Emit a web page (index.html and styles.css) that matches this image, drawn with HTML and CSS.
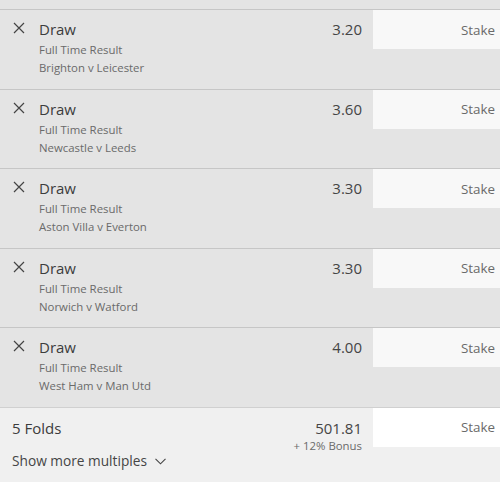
FILE: index.html
```html
<!DOCTYPE html>
<html>
<head>
<meta charset="utf-8">
<link rel="stylesheet" href="styles.css">
</head>
<body>
<div class="slip">
  <div class="top"></div>
  <div class="bet">
    <div class="close"><svg width="12" height="12" viewBox="0 0 12 12"><path d="M1 1L11 11M11 1L1 11" stroke="#444" stroke-width="1.2" fill="none"/></svg></div>
    <div class="info">
      <div class="sel">Draw</div>
      <div class="sub">Full Time Result</div>
      <div class="sub">Brighton v Leicester</div>
    </div>
    <div class="odds">3.20</div>
    <div class="stake">Stake</div>
  </div>
  <div class="bet">
    <div class="close"><svg width="12" height="12" viewBox="0 0 12 12"><path d="M1 1L11 11M11 1L1 11" stroke="#444" stroke-width="1.2" fill="none"/></svg></div>
    <div class="info">
      <div class="sel">Draw</div>
      <div class="sub">Full Time Result</div>
      <div class="sub">Newcastle v Leeds</div>
    </div>
    <div class="odds">3.60</div>
    <div class="stake">Stake</div>
  </div>
  <div class="bet">
    <div class="close"><svg width="12" height="12" viewBox="0 0 12 12"><path d="M1 1L11 11M11 1L1 11" stroke="#444" stroke-width="1.2" fill="none"/></svg></div>
    <div class="info">
      <div class="sel">Draw</div>
      <div class="sub">Full Time Result</div>
      <div class="sub">Aston Villa v Everton</div>
    </div>
    <div class="odds">3.30</div>
    <div class="stake">Stake</div>
  </div>
  <div class="bet">
    <div class="close"><svg width="12" height="12" viewBox="0 0 12 12"><path d="M1 1L11 11M11 1L1 11" stroke="#444" stroke-width="1.2" fill="none"/></svg></div>
    <div class="info">
      <div class="sel">Draw</div>
      <div class="sub">Full Time Result</div>
      <div class="sub">Norwich v Watford</div>
    </div>
    <div class="odds">3.30</div>
    <div class="stake">Stake</div>
  </div>
  <div class="bet">
    <div class="close"><svg width="12" height="12" viewBox="0 0 12 12"><path d="M1 1L11 11M11 1L1 11" stroke="#444" stroke-width="1.2" fill="none"/></svg></div>
    <div class="info">
      <div class="sel">Draw</div>
      <div class="sub">Full Time Result</div>
      <div class="sub">West Ham v Man Utd</div>
    </div>
    <div class="odds">4.00</div>
    <div class="stake">Stake</div>
  </div>
  <div class="multi">
    <div class="multi-row">
      <div class="folds">5 Folds</div>
      <div class="multi-odds">
        <div class="mval">501.81</div>
        <div class="bonus">+ 12% Bonus</div>
      </div>
      <div class="stake white">Stake</div>
    </div>
    <div class="more">Show more multiples <svg class="chev" width="11" height="7" viewBox="0 0 11 7"><path d="M0.5 0.8L5.5 5.8L10.5 0.8" stroke="#444" stroke-width="1.1" fill="none"/></svg></div>
  </div>
</div>
</body>
</html>
```

FILE: styles.css
```css
html, body {
  margin: 0;
  padding: 0;
}
body {
  width: 500px;
  height: 482px;
  overflow: hidden;
  background: #f0f0f0;
  font-family: "Open Sans", "Noto Sans", sans-serif;
  color: #3a3a3a;
}
.slip {
  display: flex;
  flex-direction: column;
}
.top {
  height: 9px;
  background: #e4e4e4;
}
.bet {
  box-sizing: border-box;
  height: 79.6px;
  border-top: 1px solid #c6c6c6;
  background: #e4e4e4;
  display: flex;
  align-items: flex-start;
}
.close {
  width: 39px;
  padding-top: 12px;
  padding-left: 13px;
  box-sizing: border-box;
  line-height: 0;
}
.info {
  flex: 1;
  padding-top: 9px;
}
.sel {
  font-size: 15px;
  line-height: 20px;
  margin-bottom: 2px;
  color: #3c3c3c;
}
.sub {
  font-size: 11.4px;
  line-height: 18px;
  color: #6a6a6a;
}
.odds {
  font-size: 15px;
  line-height: 20px;
  padding-top: 9px;
  padding-right: 11px;
  color: #454545;
}
.stake {
  width: 127px;
  height: 39px;
  box-sizing: border-box;
  background: #f8f8f8;
  font-size: 13.4px;
  color: #6a6a6a;
  display: flex;
  align-items: center;
  justify-content: flex-end;
  padding-right: 5px;
}
.stake.white {
  background: #fff;
}
.multi {
  border-top: 1px solid #d0d0d0;
  background: #f0f0f0;
  flex: 1;
}
.multi-row {
  display: flex;
  align-items: flex-start;
}
.folds {
  flex: 1;
  padding-left: 12px;
  padding-top: 9px;
  font-size: 15px;
  line-height: 22px;
  color: #3c3c3c;
}
.multi-odds {
  padding-top: 9px;
  padding-right: 11px;
  text-align: right;
}
.mval {
  font-size: 15px;
  line-height: 22px;
  color: #454545;
}
.bonus {
  font-size: 11.4px;
  line-height: 13px;
  color: #6a6a6a;
}
.more {
  padding-left: 12px;
  font-size: 13.7px;
  line-height: 18px;
  color: #454545;
  display: flex;
  align-items: center;
  gap: 8px;
}
.chev {
  margin-top: 2px;
}
```
